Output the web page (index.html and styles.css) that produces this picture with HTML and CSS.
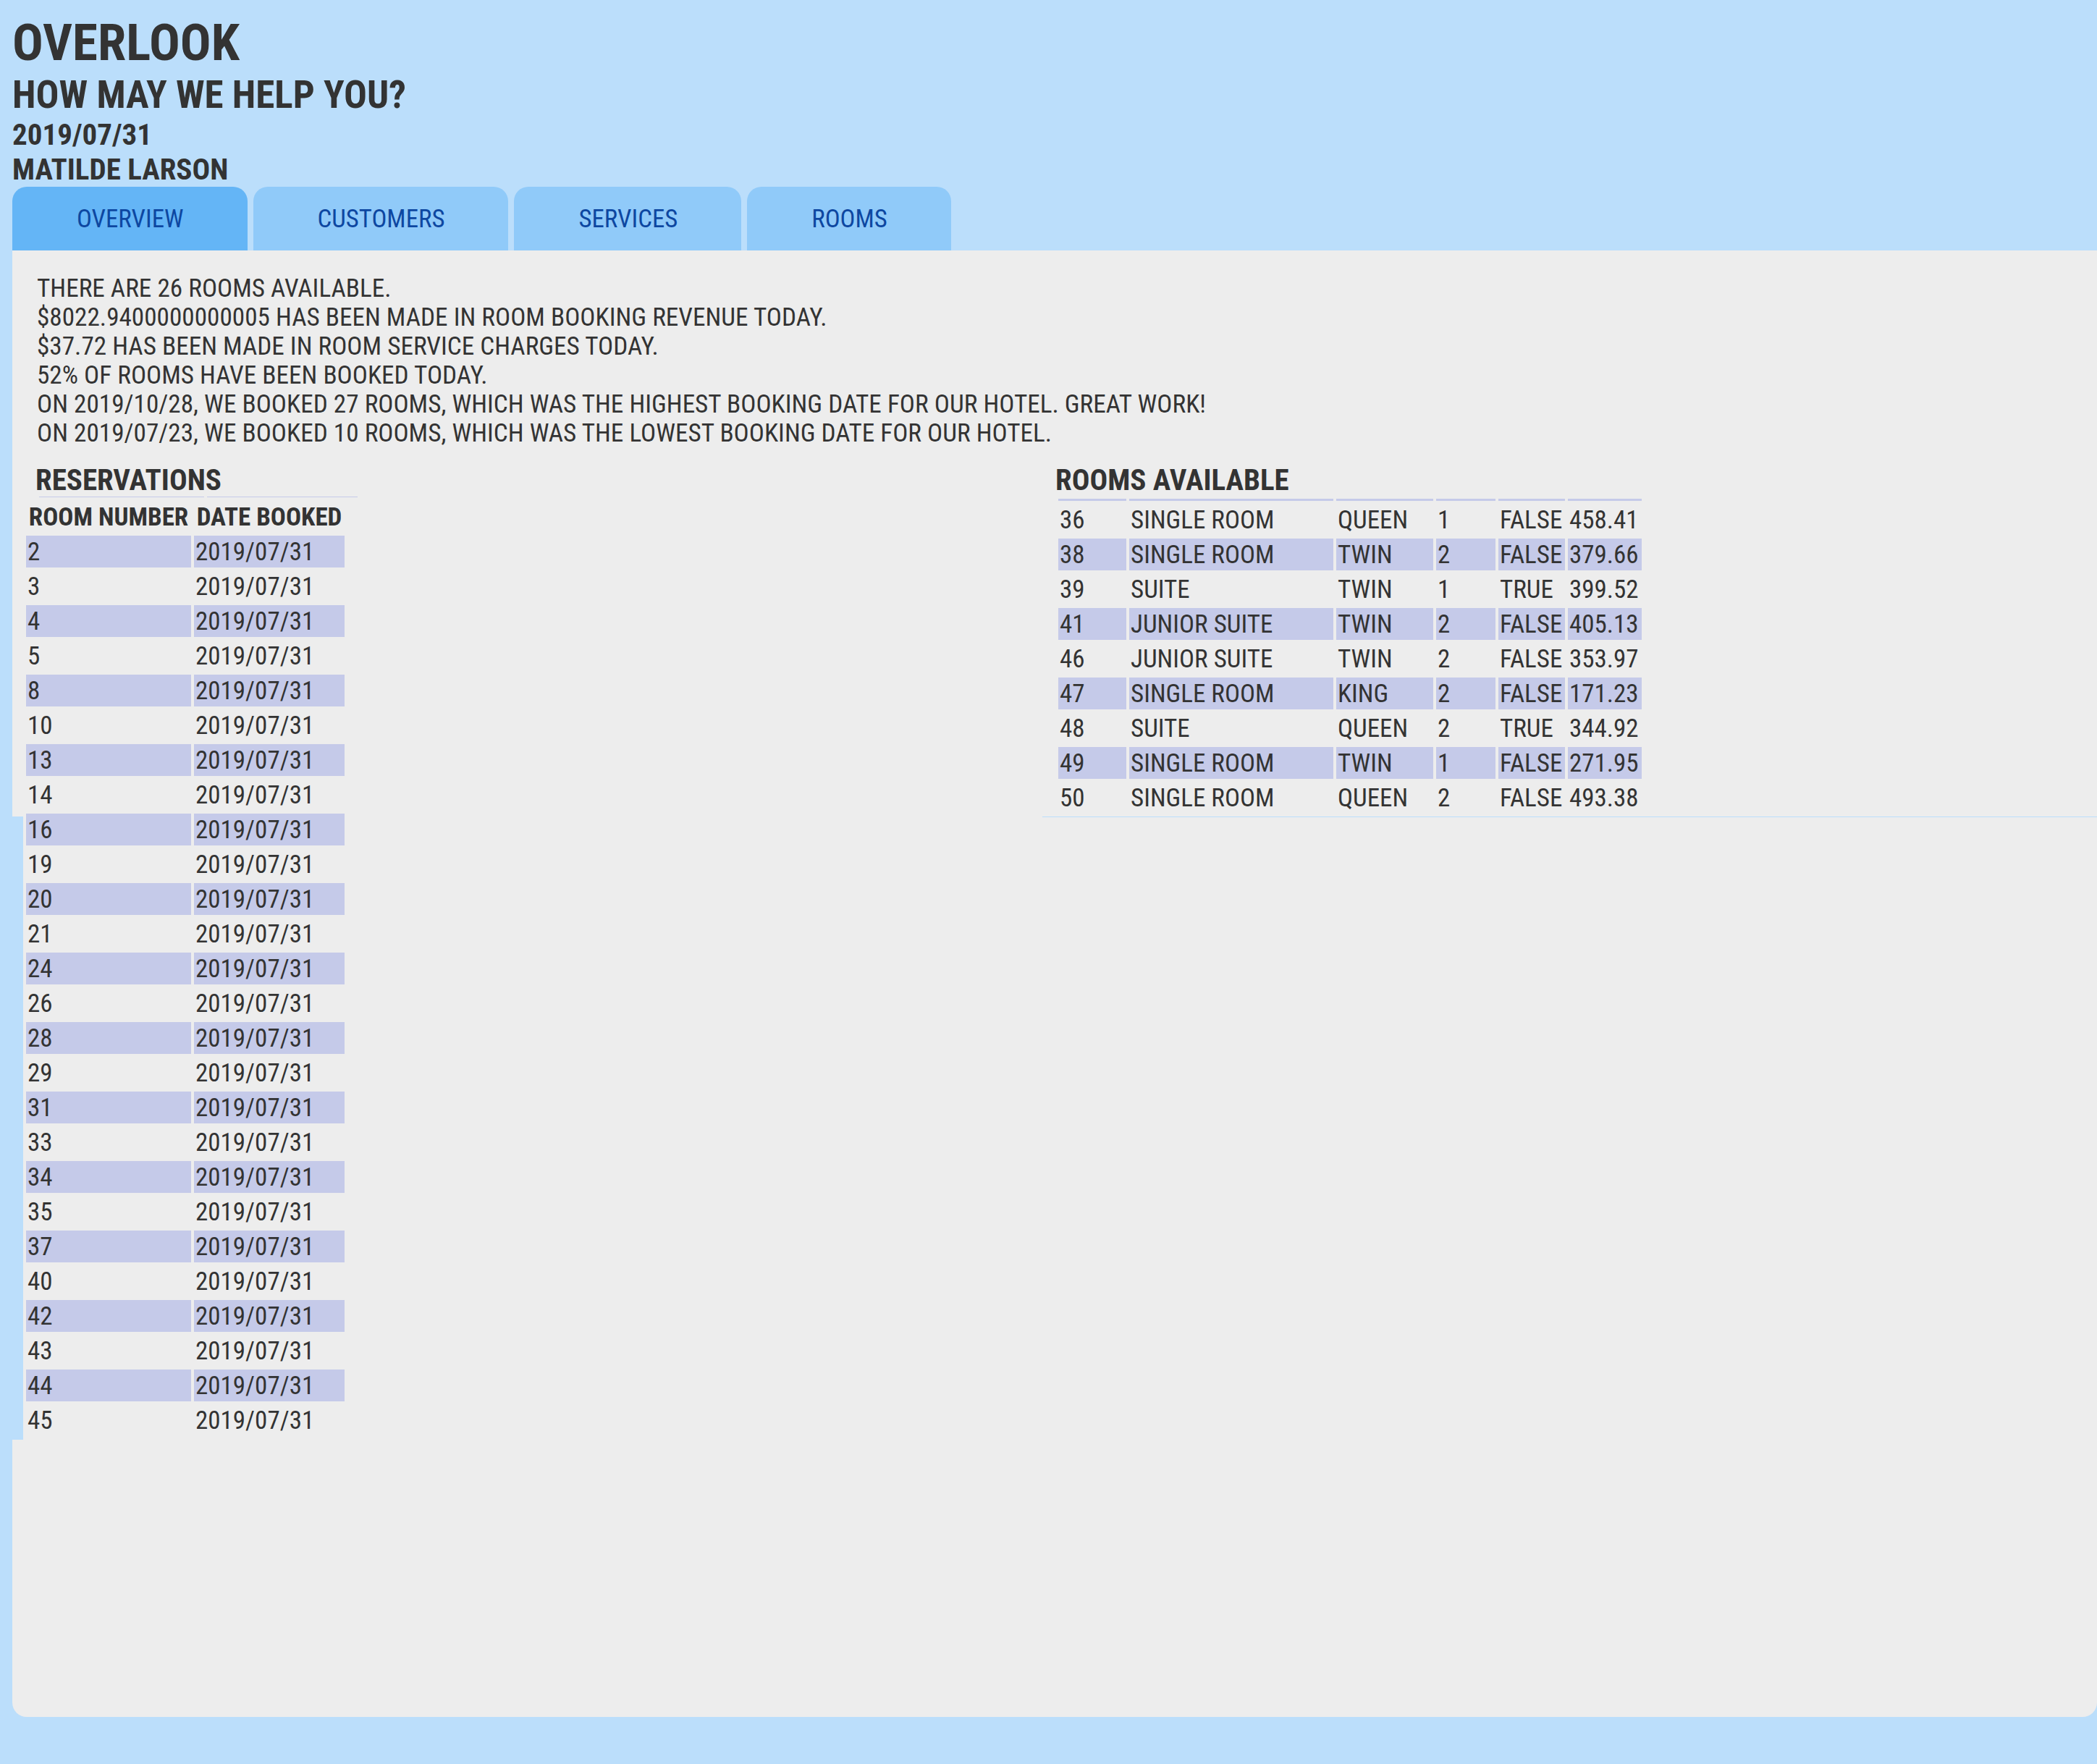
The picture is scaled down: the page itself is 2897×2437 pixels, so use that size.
FILE: index.html
```html
<!DOCTYPE html>
<html lang="en">
<head>
<meta charset="utf-8">
<title>Overlook</title>
<link rel="stylesheet" href="styles.css">
</head>
<body>
<header class="site-header">
  <h1 class="brand">OVERLOOK</h1>
  <h2 class="greeting">HOW MAY WE HELP YOU?</h2>
  <p class="meta">2019/07/31</p>
  <p class="meta">MATILDE LARSON</p>
</header>
<nav class="tabs">
  <button class="tab tab-active">OVERVIEW</button>
  <button class="tab">CUSTOMERS</button>
  <button class="tab">SERVICES</button>
  <button class="tab">ROOMS</button>
</nav>
<main class="panel">
  <section class="summary">
    <p>THERE ARE 26 ROOMS AVAILABLE.</p>
    <p>$8022.9400000000005 HAS BEEN MADE IN ROOM BOOKING REVENUE TODAY.</p>
    <p>$37.72 HAS BEEN MADE IN ROOM SERVICE CHARGES TODAY.</p>
    <p>52% OF ROOMS HAVE BEEN BOOKED TODAY.</p>
    <p>ON 2019/10/28, WE BOOKED 27 ROOMS, WHICH WAS THE HIGHEST BOOKING DATE FOR OUR HOTEL. GREAT WORK!</p>
    <p>ON 2019/07/23, WE BOOKED 10 ROOMS, WHICH WAS THE LOWEST BOOKING DATE FOR OUR HOTEL.</p>
  </section>
  <div class="tables">
    <section class="reservations">
      <h3 class="section-title res-title">RESERVATIONS</h3>
      <div class="res-lines"><span class="res-line-a"></span><span class="res-line-b"></span></div>
      <table class="res-table">
        <thead>
          <tr><th class="res-col-a">ROOM NUMBER</th><th class="res-col-b">DATE BOOKED</th></tr>
        </thead>
        <tbody>
          <tr><td>2</td><td>2019/07/31</td></tr>
          <tr><td>3</td><td>2019/07/31</td></tr>
          <tr><td>4</td><td>2019/07/31</td></tr>
          <tr><td>5</td><td>2019/07/31</td></tr>
          <tr><td>8</td><td>2019/07/31</td></tr>
          <tr><td>10</td><td>2019/07/31</td></tr>
          <tr><td>13</td><td>2019/07/31</td></tr>
          <tr><td>14</td><td>2019/07/31</td></tr>
          <tr><td>16</td><td>2019/07/31</td></tr>
          <tr><td>19</td><td>2019/07/31</td></tr>
          <tr><td>20</td><td>2019/07/31</td></tr>
          <tr><td>21</td><td>2019/07/31</td></tr>
          <tr><td>24</td><td>2019/07/31</td></tr>
          <tr><td>26</td><td>2019/07/31</td></tr>
          <tr><td>28</td><td>2019/07/31</td></tr>
          <tr><td>29</td><td>2019/07/31</td></tr>
          <tr><td>31</td><td>2019/07/31</td></tr>
          <tr><td>33</td><td>2019/07/31</td></tr>
          <tr><td>34</td><td>2019/07/31</td></tr>
          <tr><td>35</td><td>2019/07/31</td></tr>
          <tr><td>37</td><td>2019/07/31</td></tr>
          <tr><td>40</td><td>2019/07/31</td></tr>
          <tr><td>42</td><td>2019/07/31</td></tr>
          <tr><td>43</td><td>2019/07/31</td></tr>
          <tr><td>44</td><td>2019/07/31</td></tr>
          <tr><td>45</td><td>2019/07/31</td></tr>
        </tbody>
      </table>
    </section>
    <section class="rooms">
      <h3 class="section-title">ROOMS AVAILABLE</h3>
      <table class="rooms-table">
        <thead>
          <tr><th class="rc1"></th><th class="rc2"></th><th class="rc3"></th><th class="rc4"></th><th class="rc5"></th><th class="rc6"></th></tr>
        </thead>
        <tbody>
          <tr><td>36</td><td>SINGLE ROOM</td><td>QUEEN</td><td>1</td><td>FALSE</td><td>458.41</td></tr>
          <tr><td>38</td><td>SINGLE ROOM</td><td>TWIN</td><td>2</td><td>FALSE</td><td>379.66</td></tr>
          <tr><td>39</td><td>SUITE</td><td>TWIN</td><td>1</td><td>TRUE</td><td>399.52</td></tr>
          <tr><td>41</td><td>JUNIOR SUITE</td><td>TWIN</td><td>2</td><td>FALSE</td><td>405.13</td></tr>
          <tr><td>46</td><td>JUNIOR SUITE</td><td>TWIN</td><td>2</td><td>FALSE</td><td>353.97</td></tr>
          <tr><td>47</td><td>SINGLE ROOM</td><td>KING</td><td>2</td><td>FALSE</td><td>171.23</td></tr>
          <tr><td>48</td><td>SUITE</td><td>QUEEN</td><td>2</td><td>TRUE</td><td>344.92</td></tr>
          <tr><td>49</td><td>SINGLE ROOM</td><td>TWIN</td><td>1</td><td>FALSE</td><td>271.95</td></tr>
          <tr><td>50</td><td>SINGLE ROOM</td><td>QUEEN</td><td>2</td><td>FALSE</td><td>493.38</td></tr>
        </tbody>
      </table>
    </section>
  </div>
</main>
</body>
</html>
```

FILE: styles.css
```css
html {
  background: #bbdefb;
}

body {
  margin: 17px 0 0 17px;
  font-family: "Roboto Condensed", Roboto, "Liberation Sans", sans-serif;
  font-stretch: condensed;
  color: #333333;
}

.site-header {
  display: flex;
  flex-direction: column;
}

.brand {
  margin: 0;
  font-size: 71px;
  line-height: 84px;
  font-weight: 700;
}

.greeting {
  margin: 0;
  font-size: 53px;
  line-height: 61px;
  font-weight: 700;
}

.meta {
  margin: 0;
  font-size: 41px;
  line-height: 48px;
  font-weight: 700;
}

.tabs {
  display: flex;
  gap: 8px;
}

.tab {
  height: 88px;
  padding: 0 88px 0 89px;
  border: none;
  border-radius: 20px 20px 0 0;
  background: #90caf9;
  color: #0d47a1;
  font-family: inherit;
  font-stretch: condensed;
  font-size: 34.8px;
  line-height: 41px;
  cursor: pointer;
}

.tab-active {
  background: #64b5f6;
}

.panel {
  display: block;
  box-sizing: border-box;
  height: 2026px;
  padding-top: 32px;
  border-radius: 0 0 20px 20px;
  background: linear-gradient(#bbdefb, #bbdefb) 0 782px / 15px 861px no-repeat, #ededed;
}

.summary {
  padding-left: 34px;
  font-size: 35.2px;
  line-height: 40px;
}

.summary p {
  margin: 0;
}

.tables {
  display: flex;
  align-items: flex-start;
  margin-top: 23px;
}

.reservations {
  flex: 0 0 1408px;
  margin-left: 15px;
}

.rooms {
  flex: 1;
  padding-left: 18px;
  border-bottom: 1px solid #bbdefb;
}

.section-title {
  margin: 0;
  font-size: 41px;
  line-height: 44px;
  font-weight: 700;
}

.res-title {
  padding-left: 17px;
}

.res-lines {
  display: flex;
  gap: 4px;
  height: 2px;
  margin: 1px 0 0 22px;
}

.res-line-a,
.res-line-b {
  display: block;
  height: 1px;
  background: #c5cae9;
}

.res-line-a {
  width: 228px;
}

.res-line-b {
  width: 208px;
}

table {
  border-collapse: separate;
  border-spacing: 4px;
  font-size: 35px;
  line-height: 40px;
}

th,
td {
  box-sizing: border-box;
  padding: 3px 2px 1px;
  text-align: left;
  white-space: nowrap;
}

.res-table th {
  text-align: center;
  font-weight: 700;
}

.res-col-a {
  width: 228px;
}

.res-col-b {
  width: 208px;
}

.res-table tbody tr:nth-child(odd) td {
  background: #c5cae9;
}

.rooms-table th {
  height: 3px;
  padding: 0;
  font-size: 0;
  line-height: 0;
  background: #c5cae9;
}

.rc1 { width: 94px; }
.rc2 { width: 282px; }
.rc3 { width: 134px; }
.rc4 { width: 82px; }
.rc5 { width: 92px; }
.rc6 { width: 102px; }

.rooms-table tbody tr:nth-child(even) td {
  background: #c5cae9;
}
```
